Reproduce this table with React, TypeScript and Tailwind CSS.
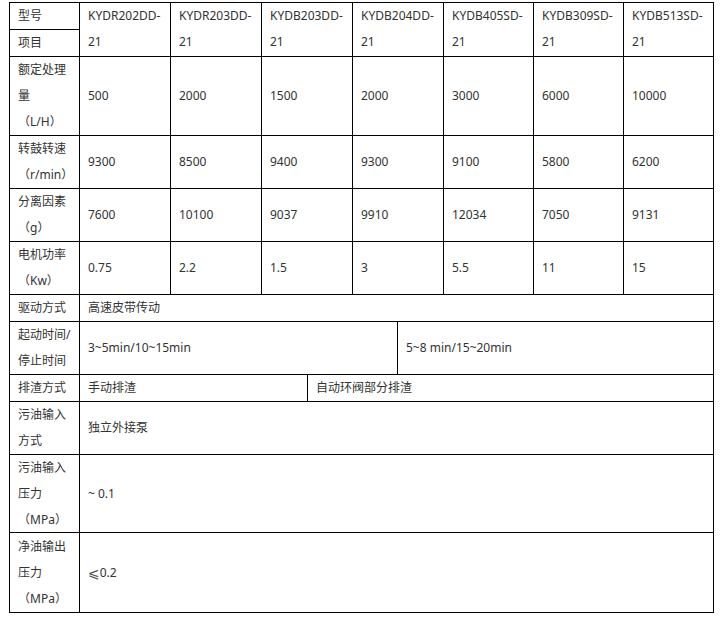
import React from "react";

const cellW = ["w-[91px]", "w-[91px]", "w-[91px]", "w-[91px]", "w-[90px]", "w-[90px]", "w-[90px]"];

const models = ["KYDR202DD", "KYDR203DD", "KYDB203DD", "KYDB204DD", "KYDB405SD", "KYDB309SD", "KYDB513SD"];

type DataRow = { label: string[]; values: string[]; h: string };

const dataRows: DataRow[] = [
  { label: ["额定处理", "量", "（L/H）"], values: ["500", "2000", "1500", "2000", "3000", "6000", "10000"], h: "h-[79px]" },
  { label: ["转鼓转速", "（r/min）"], values: ["9300", "8500", "9400", "9300", "9100", "5800", "6200"], h: "h-[53px]" },
  { label: ["分离因素", "（g）"], values: ["7600", "10100", "9037", "9910", "12034", "7050", "9131"], h: "h-[53px]" },
  { label: ["电机功率", "（Kw）"], values: ["0.75", "2.2", "1.5", "3", "5.5", "11", "15"], h: "h-[53px]" },
];

const cell = "flex items-center px-2 border-r border-b border-black shrink-0";

function Label({ lines }: { lines: string[] }) {
  return (
    <div>
      {lines.map((l, i) => (
        <div key={i} className="whitespace-nowrap">{l}</div>
      ))}
    </div>
  );
}

export default function App() {
  return (
    <div className="bg-white w-[721px] h-[621px] pt-[2px] pl-[9px] font-['Noto_Sans','Noto_Sans_CJK_SC',sans-serif] text-[12px] leading-[26px] text-[#333]">
      <div className="w-[705px] border-l border-t border-black">
        {/* header */}
        <div className="flex h-[54px]">
          <div className="w-[70px] shrink-0 flex flex-col">
            <div className={`${cell} w-[70px] h-[27px]`}>型号</div>
            <div className={`${cell} w-[70px] h-[27px]`}>项目</div>
          </div>
          {models.map((m, i) => (
            <div key={m} className={`px-2 border-r border-b border-black shrink-0 h-[54px] ${cellW[i]}`}>
              <div className="whitespace-nowrap">{m}-</div>
              <div>21</div>
            </div>
          ))}
        </div>
        {dataRows.map((r, ri) => (
          <div key={ri} className={`flex ${r.h}`}>
            <div className={`${cell} w-[70px] h-full`}>
              <Label lines={r.label} />
            </div>
            {r.values.map((v, i) => (
              <div key={i} className={`${cell} h-full ${cellW[i]}`}>{v}</div>
            ))}
          </div>
        ))}
        <div className="flex h-[27px]">
          <div className={`${cell} w-[70px] h-full`}>驱动方式</div>
          <div className={`${cell} w-[634px] h-full`}>高速皮带传动</div>
        </div>
        <div className="flex h-[53px]">
          <div className={`${cell} w-[70px] h-full`}>
            <Label lines={["起动时间/", "停止时间"]} />
          </div>
          <div className={`${cell} w-[318px] h-full`}>3~5min/10~15min</div>
          <div className={`${cell} w-[316px] h-full`}>5~8 min/15~20min</div>
        </div>
        <div className="flex h-[27px]">
          <div className={`${cell} w-[70px] h-full`}>排渣方式</div>
          <div className={`${cell} w-[228px] h-full`}>手动排渣</div>
          <div className={`${cell} w-[406px] h-full`}>自动环阀部分排渣</div>
        </div>
        <div className="flex h-[53px]">
          <div className={`${cell} w-[70px] h-full`}>
            <Label lines={["污油输入", "方式"]} />
          </div>
          <div className={`${cell} w-[634px] h-full`}>独立外接泵</div>
        </div>
        <div className="flex h-[78px]">
          <div className={`${cell} w-[70px] h-full`}>
            <Label lines={["污油输入", "压力", "（MPa）"]} />
          </div>
          <div className={`${cell} w-[634px] h-full`}>~ 0.1</div>
        </div>
        <div className="flex h-[80px]">
          <div className={`${cell} w-[70px] h-full`}>
            <Label lines={["净油输出", "压力", "（MPa）"]} />
          </div>
          <div className={`${cell} w-[634px] h-full`}>
            <span className="font-['DejaVu_Sans',sans-serif] text-[14px] text-[#555]">⩽</span>0.2
          </div>
        </div>
      </div>
    </div>
  );
}
